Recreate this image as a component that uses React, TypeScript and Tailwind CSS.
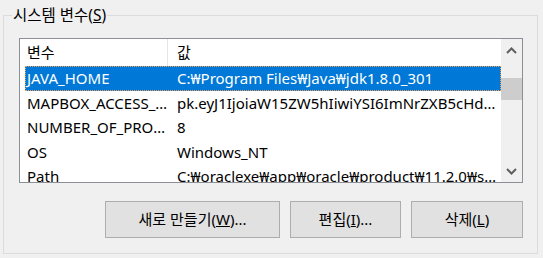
const FONT = { fontFamily: '"Noto Sans", "Noto Sans CJK KR", sans-serif' };

type Row = { name: string; value: string };

const rows: Row[] = [
  { name: 'JAVA_HOME', value: 'C:₩Program Files₩Java₩jdk1.8.0_301' },
  { name: 'MAPBOX_ACCESS_TOKEN', value: 'pk.eyJ1IjoiaW15ZW5hIiwiYSI6ImNrZXB5cHdkcDAwMnAycm8' },
  { name: 'NUMBER_OF_PROCESSORS', value: '8' },
  { name: 'OS', value: 'Windows_NT' },
  { name: 'Path', value: 'C:₩oraclexe₩app₩oracle₩product₩11.2.0₩server₩bin' },
];

function Chevron({ up }: { up?: boolean }) {
  return (
    <svg width="11" height="7" viewBox="0 0 11 7" className={up ? '' : 'rotate-180'}>
      <path d="M1 6 L5.5 1.5 L10 6" fill="none" stroke="#606060" strokeWidth="2" />
    </svg>
  );
}

function Btn({ w, children }: { w: string; children: React.ReactNode }) {
  return (
    <button className={`${w} h-[37px] bg-[#e1e1e1] border border-[#adadad] text-[15px] text-black flex items-center justify-center`}>
      {children}
    </button>
  );
}

export default function App() {
  return (
    <div className="w-[543px] h-[258px] bg-[#f0f0f0] pt-[4px] pl-[3px] text-black" style={FONT}>
      <fieldset className="w-[535px] h-[250px] border border-[#dcdcdc] pl-[15px] pt-[12px]">
        <legend className="-ml-[7px] px-[1px] text-[15.5px] leading-[22px]">
          시스템 변수(<span className="underline">S</span>)
        </legend>

        <div className="w-[504px] h-[145px] border border-[#8c8f96] bg-white flex">
          <div className="flex-1 pl-[5px] overflow-hidden">
            <div className="h-[27px] flex items-center text-[15px]">
              <div className="w-[143px] h-full border-r border-[#e5e5e5] pl-[2px] flex items-center">변수</div>
              <div className="pl-[9px]">값</div>
            </div>
            {rows.map((r, i) => (
              <div
                key={r.name}
                className={`h-[24.5px] flex items-center text-[15px] whitespace-nowrap ${
                  i === 0 ? 'bg-[#0078d7] text-white outline-1 outline-dotted outline-[#f0a050] -outline-offset-1' : ''
                }`}
              >
                <div className="w-[152px] pl-[2px] pr-[3px] truncate">{r.name}</div>
                <div className="flex-1 pr-[4px] truncate">{r.value}</div>
              </div>
            ))}
          </div>
          <div className="w-[21px] bg-[#f0f0f0] flex flex-col">
            <div className="h-[22px] flex items-center justify-center">
              <Chevron up />
            </div>
            <div className="mt-[17px] h-[22px] bg-[#cdcdcd]" />
            <div className="flex-1" />
            <div className="h-[22px] flex items-center justify-center">
              <Chevron />
            </div>
          </div>
        </div>

        <div className="mt-[18px] w-[504px] flex justify-end gap-[10px]">
          <Btn w="w-[175px]">
            새로 만들기(<span className="underline">W</span>)...
          </Btn>
          <Btn w="w-[111px]">
            편집(<span className="underline">I</span>)...
          </Btn>
          <Btn w="w-[112px]">
            삭제(<span className="underline">L</span>)
          </Btn>
        </div>
      </fieldset>
    </div>
  );
}
